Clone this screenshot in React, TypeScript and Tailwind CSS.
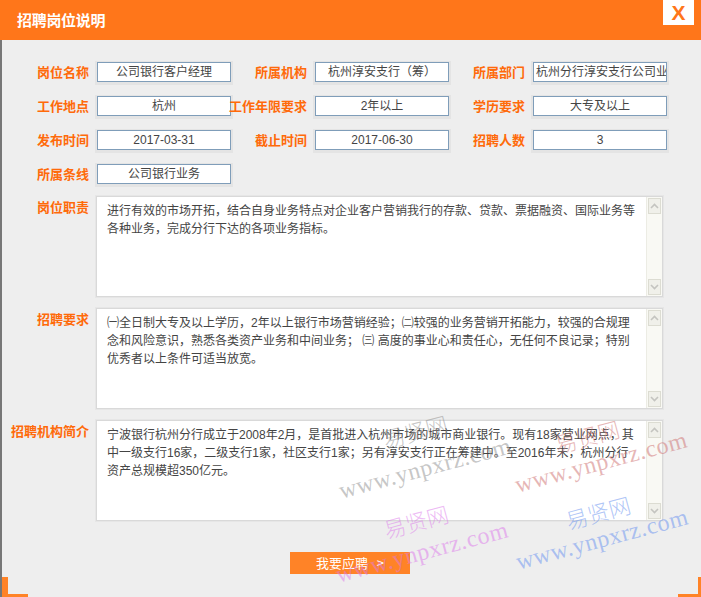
import React from "react";

const FONT = { fontFamily: '"Liberation Sans", "Noto Sans CJK SC", sans-serif' };
const CJK = { fontFamily: '"Noto Sans CJK SC", sans-serif' };

function Label({ text, w = "w-[76px]" }: { text: string; w?: string }) {
  return (
    <div className={`${w} shrink-0 flex justify-end whitespace-nowrap text-[13px] font-bold text-[#ff6a0a] leading-[20px]`} style={CJK}>
      {text}
    </div>
  );
}

function Field({ value, left = false }: { value: string; left?: boolean }) {
  return (
    <div
      className={`ml-[8px] w-[134px] h-[20px] shrink-0 border border-[#7f9db9] bg-white text-[12px] text-[#444] leading-[18px] whitespace-nowrap overflow-hidden shadow-[0_1px_0_2px_#e4e4e4] ${left ? "text-left pl-[2px]" : "text-center"}`}
      style={FONT}
    >
      {value}
    </div>
  );
}

function ScrollBar() {
  return (
    <div className="w-[16px] shrink-0 flex flex-col bg-[#f9f9f4] border-l border-[#ecece4]">
      <div className="h-[16px] mx-[1px] mt-[1px] border border-[#dcdcd2] bg-[#f0f0ea] flex items-center justify-center">
        <svg width="9" height="6" viewBox="0 0 9 6">
          <path d="M1 5 L4.5 1.5 L8 5" stroke="#c4c4c0" strokeWidth="1.6" fill="none" />
        </svg>
      </div>
      <div className="flex-1" />
      <div className="h-[16px] mx-[1px] mb-[1px] border border-[#dcdcd2] bg-[#f0f0ea] flex items-center justify-center">
        <svg width="9" height="6" viewBox="0 0 9 6">
          <path d="M1 1 L4.5 4.5 L8 1" stroke="#c4c4c0" strokeWidth="1.6" fill="none" />
        </svg>
      </div>
    </div>
  );
}

function Area({ label, lines }: { label: string; lines: string[] }) {
  return (
    <div className="flex">
      <div className="w-[76px] shrink-0 flex justify-end whitespace-nowrap text-[13px] font-bold text-[#ff6a0a] leading-[20px] pt-[1px]" style={CJK}>
        {label}
      </div>
      <div className="ml-[7px] w-[567px] h-[101px] bg-white border border-[#d9d9d9] shadow-[0_0_0_1px_#e6e6e6] flex">
        <div className="flex-1 pl-[10px] pt-[5px] text-[12px] leading-[18px] text-[#444] overflow-hidden" style={FONT}>
          {lines.map((l, i) => (
            <div key={i} className="whitespace-nowrap">
              {l}
            </div>
          ))}
        </div>
        <ScrollBar />
      </div>
    </div>
  );
}

function Mark({ text, x, y, color, cjk = false }: { text: string; x: number; y: number; color: string; cjk?: boolean }) {
  return (
    <div
      className={`absolute pointer-events-none whitespace-nowrap -translate-x-1/2 -translate-y-1/2 -rotate-[15deg] ${cjk ? "text-[22px]" : "text-[24px] tracking-[0.5px]"}`}
      style={{
        left: x,
        top: y,
        color,
        fontFamily: cjk ? '"Noto Sans CJK SC", sans-serif' : '"Liberation Serif", serif',
        fontWeight: cjk ? 300 : 400,
      }}
    >
      {text}
    </div>
  );
}

export default function App() {
  return (
    <div className="relative w-[701px] h-[597px] overflow-hidden bg-[#eeeeee]">
      <div className="relative h-[40px] bg-[#ff761a] flex items-center pl-[17px]">
        <span className="text-white text-[15px] font-bold tracking-[-0.3px]" style={CJK}>
          招聘岗位说明
        </span>
        <div className="absolute right-[7px] top-0 w-[31px] h-[25px] bg-white flex items-center justify-center">
          <span className="text-[#ff761a] text-[21px] font-bold leading-none" style={{ fontFamily: '"Liberation Sans", sans-serif' }}>
            X
          </span>
        </div>
      </div>

      <div className="h-[557px] border-l-2 border-[#777777] pl-[11px] pt-[22px]">
        <div className="flex flex-col gap-[14px]">
          <div className="flex">
            <Label text="岗位名称" />
            <Field value="公司银行客户经理" />
            <Label text="所属机构" />
            <Field value="杭州淳安支行（筹）" />
            <Label text="所属部门" />
            <Field value="杭州分行淳安支行公司业务部" left />
          </div>
          <div className="flex">
            <Label text="工作地点" />
            <Field value="杭州" />
            <Label text="工作年限要求" />
            <Field value="2年以上" />
            <Label text="学历要求" />
            <Field value="大专及以上" />
          </div>
          <div className="flex">
            <Label text="发布时间" />
            <Field value="2017-03-31" />
            <Label text="截止时间" />
            <Field value="2017-06-30" />
            <Label text="招聘人数" />
            <Field value="3" />
          </div>
          <div className="flex">
            <Label text="所属条线" />
            <Field value="公司银行业务" />
          </div>
        </div>

        <div className="mt-[12px] flex flex-col gap-[11px]">
          <Area
            label="岗位职责"
            lines={[
              "进行有效的市场开拓，结合自身业务特点对企业客户营销我行的存款、贷款、票据融资、国际业务等",
              "各种业务，完成分行下达的各项业务指标。",
            ]}
          />
          <Area
            label="招聘要求"
            lines={[
              "㈠全日制大专及以上学历，2年以上银行市场营销经验；㈡较强的业务营销开拓能力，较强的合规理",
              "念和风险意识，熟悉各类资产业务和中间业务； ㈢ 高度的事业心和责任心，无任何不良记录；特别",
              "优秀者以上条件可适当放宽。",
            ]}
          />
          <Area
            label="招聘机构简介"
            lines={[
              "宁波银行杭州分行成立于2008年2月，是首批进入杭州市场的城市商业银行。现有18家营业网点，其",
              "中一级支行16家，二级支行1家，社区支行1家；另有淳安支行正在筹建中。至2016年末，杭州分行",
              "资产总规模超350亿元。",
            ]}
          />
        </div>

        <div className="mt-[31px] ml-[277px] w-[120px] h-[22px] bg-[#ff8327] flex items-center justify-center text-white text-[13px]" style={CJK}>
          我要应聘&nbsp;&nbsp;&nbsp;&gt;
        </div>
      </div>

      <Mark text="易贤网" x={415} y={431} color="rgba(150,150,150,0.55)" cjk />
      <Mark text="www.ynpxrz.com" x={425} y={468} color="rgba(150,150,150,0.55)" />
      <Mark text="易贤网" x={587} y={436} color="rgba(205,110,110,0.5)" cjk />
      <Mark text="www.ynpxrz.com" x={601} y={462} color="rgba(205,110,110,0.5)" />
      <Mark text="易贤网" x={416} y={521} color="rgba(220,120,235,0.5)" cjk />
      <Mark text="www.ynpxrz.com" x={422} y={552} color="rgba(220,120,235,0.5)" />
      <Mark text="易贤网" x={598} y={512} color="rgba(110,150,240,0.55)" cjk />
      <Mark text="www.ynpxrz.com" x={602} y={539} color="rgba(110,150,240,0.55)" />

      <div className="absolute left-[2px] bottom-0 w-[6px] h-[20px] bg-[#ff8327]" />
      <div className="absolute left-[2px] bottom-0 w-[26px] h-[3px] bg-[#ff8327]" />
      <div className="absolute right-0 bottom-0 w-[3px] h-[20px] bg-[#ff8327]" />
      <div className="absolute right-0 bottom-0 w-[23px] h-[3px] bg-[#ff8327]" />
    </div>
  );
}
